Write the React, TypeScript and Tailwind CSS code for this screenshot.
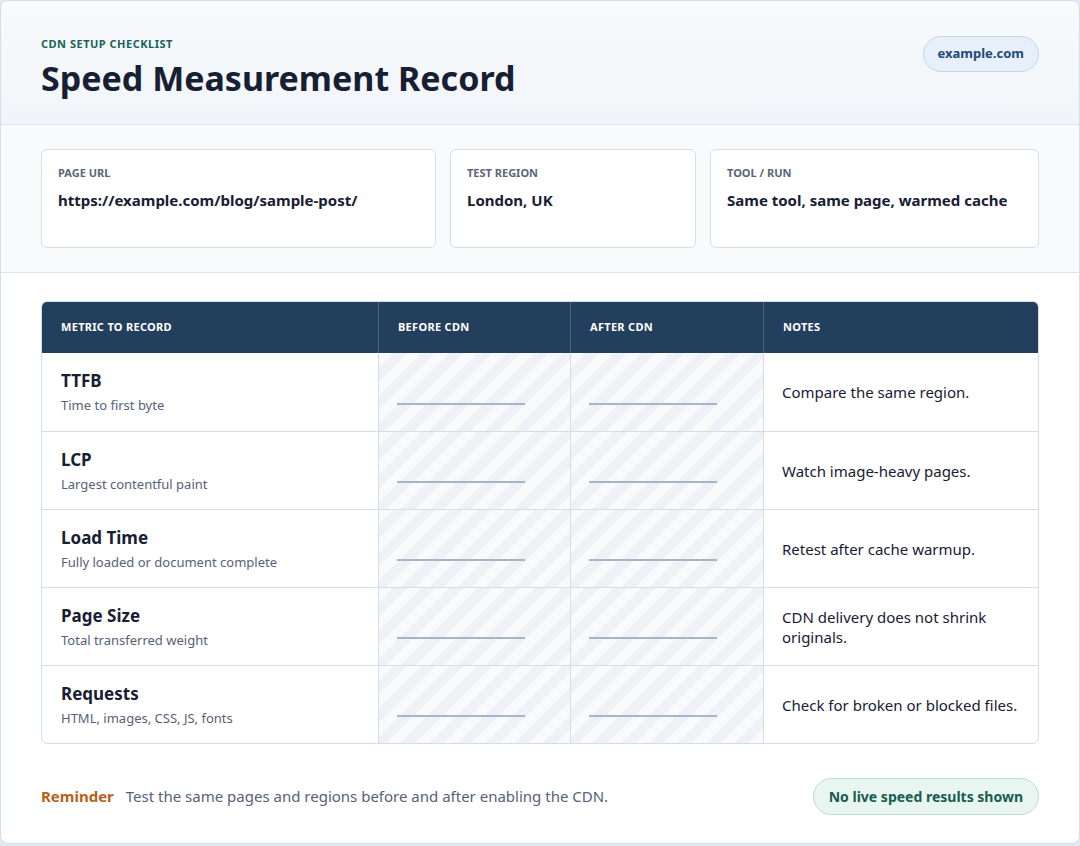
import React from "react";

const rows = [
  ["TTFB", "Time to first byte", "Compare the same region."],
  ["LCP", "Largest contentful paint", "Watch image-heavy pages."],
  ["Load Time", "Fully loaded or document complete", "Retest after cache warmup."],
  ["Page Size", "Total transferred weight", "CDN delivery does not shrink originals."],
  ["Requests", "HTML, images, CSS, JS, fonts", "Check for broken or blocked files."],
];

const stripe =
  "bg-[repeating-linear-gradient(135deg,#f8fafc_0px,#f8fafc_10px,#eef2f7_10px,#eef2f7_20px)]";

export default function App() {
  return (
    <div className="h-[846px] w-[1080px] bg-[#e2e8f0] font-['DejaVu_Sans',sans-serif] text-[#172033]">
      <div className="h-[844px] overflow-hidden rounded-[8px] border border-[#d5dde8] bg-white">
        <div className="flex h-[124px] items-start justify-between border-b border-[#dbe3ec] bg-gradient-to-b from-[#f8fafc] to-[#f1f5f9] px-10 pt-[35px]">
          <div>
            <div className="text-[11px] font-bold tracking-[0.5px] text-[#166358]">CDN SETUP CHECKLIST</div>
            <div className="mt-[5px] text-[34px] font-bold leading-[40px] text-[#172033]">Speed Measurement Record</div>
          </div>
          <div className="rounded-full border border-[#c3d5ec] bg-[#e6effa] px-[14px] py-[7px] text-[13px] font-bold text-[#224a78]">example.com</div>
        </div>
        <div className="flex h-[148px] gap-[14px] border-b border-[#dbe3ec] bg-[#f8fafc] px-10 pt-6">
          {[
            ["PAGE URL", "https://example.com/blog/sample-post/", "w-[395px]"],
            ["TEST REGION", "London, UK", "w-[246px]"],
            ["TOOL / RUN", "Same tool, same page, warmed cache", "flex-1"],
          ].map(([l, v, w]) => (
            <div key={l} className={`${w} h-[99px] rounded-[6px] border border-[#d5dde8] bg-white px-4 pt-[15px]`}>
              <div className="text-[11px] font-bold text-[#5b6679]">{l}</div>
              <div className="mt-[7px] text-[15px] font-bold leading-[22px]">{v}</div>
            </div>
          ))}
        </div>
        <div className="px-10 pt-7">
          <div className="overflow-hidden rounded-[6px] border border-[#d5dde8]">
            <div className="grid h-[51px] grid-cols-[336px_192px_193px_1fr] bg-[#233f5e] text-[11px] font-bold tracking-[0.3px] text-white">
              {["METRIC TO RECORD", "BEFORE CDN", "AFTER CDN", "NOTES"].map((h, i) => (
                <div key={h} className={`flex items-center px-[19px] ${i > 0 ? "border-l border-[#4a6482]" : ""}`}>{h}</div>
              ))}
            </div>
            {rows.map(([t, s, n], i) => (
              <div key={t} className={`grid h-[78px] grid-cols-[336px_192px_193px_1fr] ${i > 0 ? "border-t border-[#d5dde8]" : ""}`}>
                <div className="px-[19px] pt-[17px]">
                  <div className="text-[17px] font-bold leading-[22px]">{t}</div>
                  <div className="mt-[4px] text-[13px] text-[#56617a]">{s}</div>
                </div>
                {[0, 1].map((k) => (
                  <div key={k} className={`${stripe} flex items-end border-l border-[#d5dde8] px-[18px] pb-[26px]`}>
                    <div className="h-[2px] w-[128px] bg-[#a9b4c4]" />
                  </div>
                ))}
                <div className="flex items-center border-l border-[#d5dde8] px-[18px] text-[15px] leading-[20px]">{n}</div>
              </div>
            ))}
          </div>
          <div className="mt-[34px] flex items-center justify-between">
            <div className="text-[15px] text-[#56617a]">
              <span className="mr-3 font-bold text-[#b85f17]">Reminder</span>Test the same pages and regions before and after enabling the CDN.
            </div>
            <div className="rounded-full border border-[#b7dccd] bg-[#e8f5f0] px-[15px] py-[7px] text-[14px] font-bold text-[#155d52]">No live speed results shown</div>
          </div>
        </div>
      </div>
    </div>
  );
}
